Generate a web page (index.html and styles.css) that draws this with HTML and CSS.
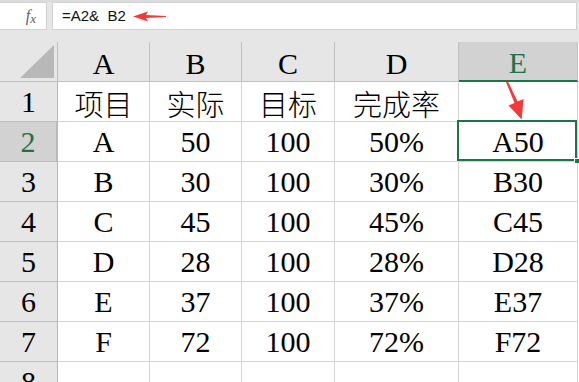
FILE: index.html
```html
<!DOCTYPE html>
<html>
<head>
<meta charset="utf-8">
<link rel="stylesheet" href="styles.css">
</head>
<body>
<div class="app">
  <div class="fbar">
    <div class="namebox"><span class="fx"><i>f</i><span class="fx-x">x</span></span></div>
    <div class="formula">=A2&amp;&nbsp; B2</div>
  </div>
  <div class="sheet">
    <div class="hdr corner"><div class="tri"></div></div>
    <div class="hdr col">A</div>
    <div class="hdr col">B</div>
    <div class="hdr col">C</div>
    <div class="hdr col">D</div>
    <div class="hdr col sel-col">E</div>

    <div class="hdr row">1</div>
    <div class="cell cjk">项目</div><div class="cell cjk">实际</div><div class="cell cjk">目标</div><div class="cell cjk">完成率</div><div class="cell"></div>

    <div class="hdr row sel-row">2</div>
    <div class="cell">A</div><div class="cell">50</div><div class="cell">100</div><div class="cell">50%</div><div class="cell active">A50<span class="handle"></span></div>

    <div class="hdr row">3</div>
    <div class="cell">B</div><div class="cell">30</div><div class="cell">100</div><div class="cell">30%</div><div class="cell">B30</div>

    <div class="hdr row">4</div>
    <div class="cell">C</div><div class="cell">45</div><div class="cell">100</div><div class="cell">45%</div><div class="cell">C45</div>

    <div class="hdr row">5</div>
    <div class="cell">D</div><div class="cell">28</div><div class="cell">100</div><div class="cell">28%</div><div class="cell">D28</div>

    <div class="hdr row">6</div>
    <div class="cell">E</div><div class="cell">37</div><div class="cell">100</div><div class="cell">37%</div><div class="cell">E37</div>

    <div class="hdr row">7</div>
    <div class="cell">F</div><div class="cell">72</div><div class="cell">100</div><div class="cell">72%</div><div class="cell">F72</div>

    <div class="hdr row">8</div>
    <div class="cell"></div><div class="cell"></div><div class="cell"></div><div class="cell"></div><div class="cell"></div>
  </div>
  <svg class="arrows" width="579" height="382" viewBox="0 0 579 382">
    <polygon points="133,16.5 148,11.5 146,15 166,16 166,17 146,18 148,21.5" fill="#f23a3a"/>
    <polygon points="506,82 508,81.5 517.5,101.5 523.5,99 521.7,119.5 508.5,105.5 514.5,103" fill="#f23a3a"/>
  </svg>
</div>
</body>
</html>
```
FILE: styles.css
```css
* { box-sizing: border-box; }
html, body { margin: 0; padding: 0; background: #ffffff; }
.app {
  position: relative;
  width: 579px;
  height: 382px;
  overflow: hidden;
}
.fbar {
  height: 42px;
  background: #e6e6e6;
  border-top: 2px solid #dcdcdc;
  display: flex;
  align-items: flex-start;
  gap: 5px;
  padding-right: 2px;
}
.namebox {
  width: 47px;
  height: 28px;
  background: #fff;
  border: 1px solid #d2d2d2;
  border-left: none;
  display: flex;
  align-items: center;
  justify-content: flex-end;
  padding-right: 10px;
}
.fx {
  font-family: "Liberation Serif", serif;
  font-size: 16px;
  color: #5f5f5f;
  line-height: 1;
}
.fx i { font-style: italic; }
.fx-x { font-style: italic; font-size: 13px; position: relative; top: 2px; }
.formula {
  flex: 1;
  height: 28px;
  background: #fff;
  border: 1px solid #d2d2d2;
  font-family: "Liberation Sans", Arial, sans-serif;
  font-size: 15px;
  line-height: 26px;
  padding-left: 9px;
  color: #111;
  white-space: pre;
}
.sheet {
  display: grid;
  grid-template-columns: 58px 92px 92px 93px 124px 119px;
  grid-auto-rows: 40px;
  font-family: "Liberation Serif", "Noto Sans CJK SC", serif;
  font-size: 30px;
  color: #000;
}
.sheet > div {
  border-right: 1px solid #d4d4d4;
  border-bottom: 1px solid #d4d4d4;
  display: flex;
  align-items: center;
  justify-content: center;
  line-height: 40px;
}
.sheet > .cjk {
  font-family: "Noto Sans CJK SC", sans-serif;
  font-weight: 300;
  font-size: 29px;
  padding-top: 2px;
}
.sheet > .hdr {
  background: #e6e6e6;
  border-right-color: #c0c0c0;
  border-bottom-color: #c0c0c0;
}
.sheet > .hdr.col { padding-top: 4px; }
.sheet > .hdr.row { border-right-color: #b9b9b9; }
.sheet > .corner {
  align-items: flex-end;
  justify-content: flex-end;
  padding: 0 3px 3px 0;
}
.tri {
  width: 34px;
  height: 33px;
  background: #b8b8b8;
  clip-path: polygon(100% 0, 100% 100%, 0 100%);
}
.sheet > .sel-col {
  background: #d2d2d2;
  color: #217346;
  border-bottom: 2px solid #217346;
}
.sheet > .sel-row {
  background: #d2d2d2;
  color: #217346;
  border-right: 2px solid #217346;
}
.sheet > .active { position: relative; }
.active::after {
  content: "";
  position: absolute;
  top: -2px;
  left: -2px;
  right: 0;
  bottom: 0;
  border: 2px solid #217346;
}
.handle {
  position: absolute;
  right: -3px;
  bottom: -3px;
  width: 6px;
  height: 6px;
  background: #217346;
  border: 1px solid #fff;
  z-index: 2;
}
.arrows {
  position: absolute;
  left: 0;
  top: 0;
  pointer-events: none;
}
```
